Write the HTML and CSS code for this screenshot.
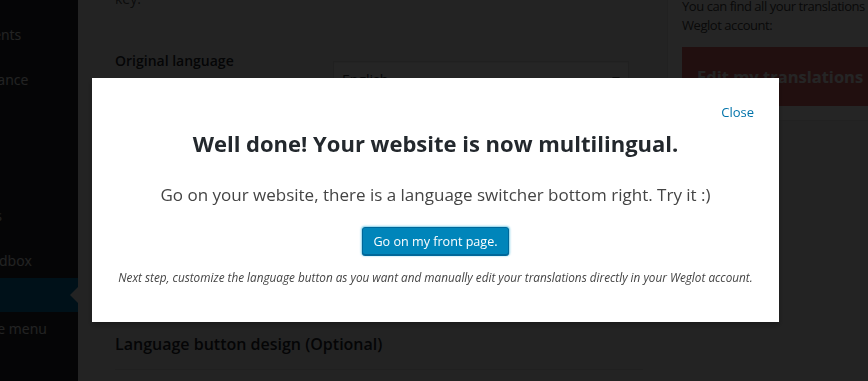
FILE: index.html
```html
<!DOCTYPE html>
<html lang="en">
<head>
<meta charset="utf-8">
<title>Weglot</title>
<link rel="stylesheet" href="styles.css">
</head>
<body>
<div class="admin">
  <nav class="sidebar">
    <ul class="menu">
      <li class="item">Comments</li>
      <li class="sep"></li>
      <li class="item">Appearance</li>
      <li class="item">Plugins</li>
      <li class="item">Users</li>
      <li class="item">Tools</li>
      <li class="item">Settings</li>
      <li class="sep"></li>
      <li class="item">WP Sandbox</li>
      <li class="item current">Weglot</li>
      <li class="item">Collapse menu</li>
    </ul>
  </nav>
  <div class="content">
    <section class="settings">
      <p class="intro">Log in with your Weglot account to get your API<br>key.</p>
      <div class="form-row">
        <div class="label-col">
          <h3 class="field-title">Original language</h3>
          <p class="field-desc">What is the original language of your website?</p>
        </div>
        <div class="field-col">
          <div class="select"><span>English</span><span class="caret"></span></div>
        </div>
      </div>
      <div class="spacer"></div>
      <h2 class="section-title">Language button design (Optional)</h2>
      <hr class="rule">
    </section>
    <aside class="side">
      <div class="side-box">
        <p class="side-text">You can find all your translations in your Weglot account:</p>
        <div class="edit-btn">Edit my translations</div>
      </div>
    </aside>
  </div>
</div>

<div class="overlay"></div>

<div class="modal">
  <div class="modal-top"><a class="close-link" href="#">Close</a></div>
  <h1 class="modal-title">Well done! Your website is now multilingual.</h1>
  <p class="modal-sub">Go on your website, there is a language switcher bottom right. Try it :)</p>
  <a class="primary-btn" href="#">Go on my front page.</a>
  <p class="modal-note">Next step, customize the language button as you want and manually edit your translations directly in your Weglot account.</p>
</div>
</body>
</html>
```

FILE: styles.css
```css
* { box-sizing: border-box; }

html, body {
  margin: 0;
  padding: 0;
  width: 868px;
  height: 381px;
  overflow: hidden;
  background: #f1f1f1;
  font-family: "Open Sans", "Noto Sans", sans-serif;
  color: #23282d;
}

.admin {
  display: flex;
  height: 381px;
}

/* ---------- sidebar ---------- */
.sidebar {
  width: 78px;
  flex: none;
  background: #23282d;
  overflow: hidden;
}

.menu {
  list-style: none;
  margin: 0 0 0 -50px;
  padding: 18px 0 0 0;
  width: 128px;
}

.item {
  height: 34px;
  line-height: 34px;
  font-size: 14px;
  color: #eeeeee;
  white-space: nowrap;
  position: relative;
}

.sep {
  height: 11px;
}

.item.current {
  background: #0073aa;
  color: #ffffff;
}

.item.current::after {
  content: "";
  position: absolute;
  right: 0;
  top: 9px;
  border-style: solid;
  border-width: 8px 8px 8px 0;
  border-color: transparent #f1f1f1 transparent transparent;
}

/* ---------- content ---------- */
.content {
  flex: 1;
  display: flex;
  min-width: 0;
}

.settings {
  width: 589px;
  flex: none;
  padding: 0 24px 0 37px;
}

.intro {
  margin: -31px 0 0 0;
  font-size: 14px;
  line-height: 20px;
  color: #555;
}

.form-row {
  display: grid;
  grid-template-columns: 218px 296px;
  margin-top: 42px;
}

.field-title {
  margin: 0;
  font-size: 14px;
  font-weight: 600;
  line-height: 20px;
  color: #23282d;
}

.field-desc {
  margin: 4px 0 0;
  font-size: 13px;
  line-height: 18px;
  color: #666;
}

.select {
  margin-top: 10px;
  height: 36px;
  border: 1px solid #ddd;
  background: #fff;
  box-shadow: 0 1px 2px rgba(0,0,0,.07) inset;
  display: flex;
  align-items: center;
  justify-content: space-between;
  padding: 0 8px;
  font-size: 14px;
  color: #32373c;
}

.caret {
  border-style: solid;
  border-width: 5px 4px 0 4px;
  border-color: #555 transparent transparent transparent;
}

.spacer {
  height: 221px;
}

.section-title {
  margin: 0;
  font-size: 16px;
  font-weight: 600;
  line-height: 24px;
  color: #23282d;
}

.rule {
  margin: 13px 0 0;
  border: 0;
  border-top: 1px solid #ddd;
}

/* ---------- right box ---------- */
.side {
  flex: 1;
  min-width: 0;
}

.side-box {
  background: #fff;
  border-left: 1px solid #e5e5e5;
  border-bottom: 1px solid #e5e5e5;
  height: 121px;
  padding: 0 0 0 14px;
  overflow: hidden;
}

.side-text {
  margin: -3px 0 0;
  width: 260px;
  font-size: 13px;
  letter-spacing: -0.45px;
  line-height: 19px;
  color: #444;
}

.edit-btn {
  margin-top: 12px;
  width: 260px;
  height: 59px;
  background: #e36969;
  color: #fff;
  font-size: 16.5px;
  font-weight: 700;
  line-height: 59px;
  padding-left: 15px;
  white-space: nowrap;
}

/* ---------- overlay & modal ---------- */
.overlay {
  position: fixed;
  inset: 0;
  background: rgba(0, 0, 0, 0.855);
}

.modal {
  position: fixed;
  left: 92px;
  top: 78px;
  width: 687px;
  height: 244px;
  background: #fff;
  box-shadow: 0 3px 6px rgba(0,0,0,.3);
  display: flex;
  flex-direction: column;
  align-items: center;
  padding-top: 26px;
  text-align: center;
}

.modal-top {
  align-self: stretch;
  display: flex;
  justify-content: flex-end;
  padding-right: 25px;
}

.close-link {
  font-size: 13px;
  line-height: 16px;
  color: #0073aa;
  text-decoration: none;
}

.modal-title {
  margin: 9px 0 0;
  font-size: 22px;
  font-weight: 700;
  line-height: 28px;
  color: #23282d;
}

.modal-sub {
  margin: 26px 0 0;
  font-size: 17px;
  line-height: 24px;
  color: #444;
}

.primary-btn {
  margin-top: 20px;
  height: 28px;
  padding: 0 10px;
  display: flex;
  align-items: center;
  background: #0085ba;
  border: 1px solid #006799;
  border-radius: 3px;
  box-shadow: 0 1px 0 #006799, 0 0 2px 1px rgba(51,179,219,.6);
  color: #fff;
  font-size: 12.6px;
  text-decoration: none;
}

.modal-note {
  margin: 14px 0 0;
  font-size: 11.75px;
  line-height: 16px;
  font-style: italic;
  color: #444;
}
```
